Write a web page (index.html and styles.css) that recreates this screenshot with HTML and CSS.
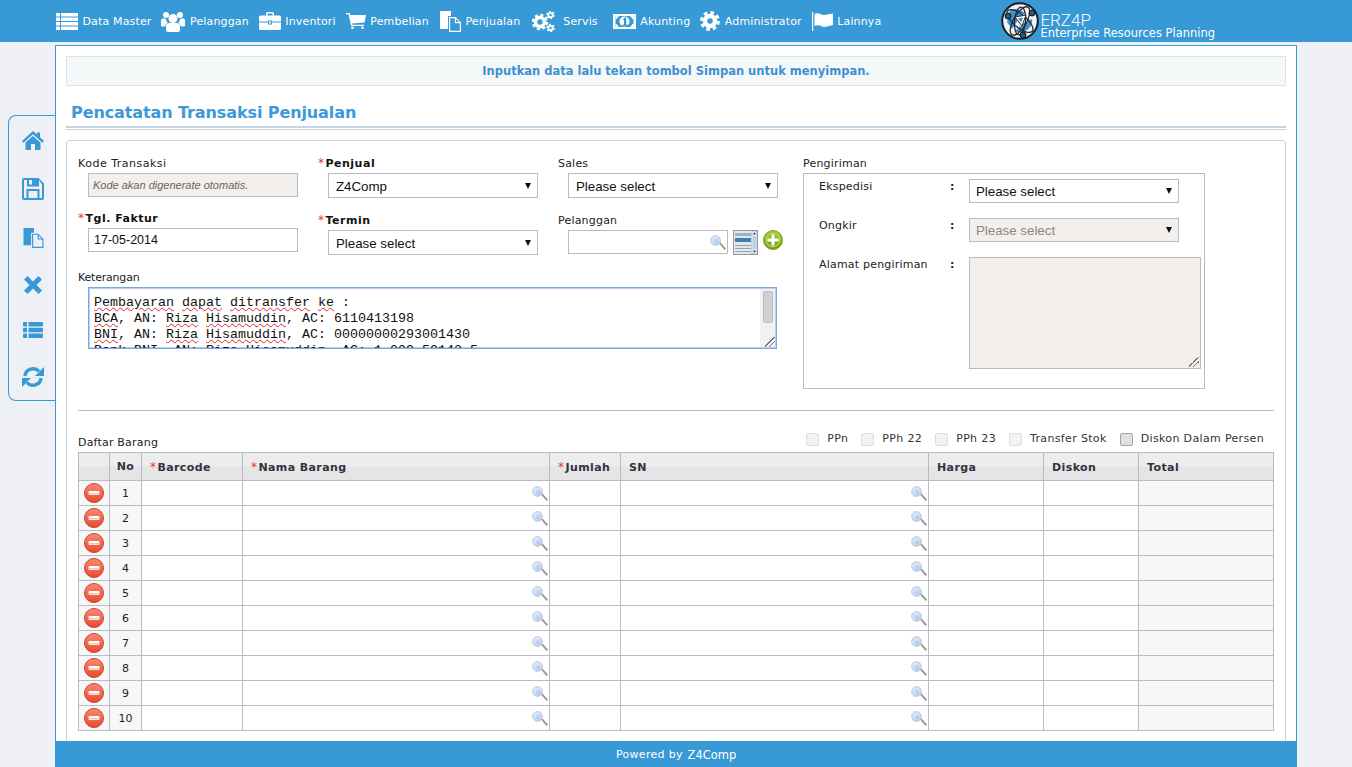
FILE: index.html
```html
<!DOCTYPE html>
<html lang="id">

<head>
    <meta charset="utf-8" />
    <title>Pencatatan Transaksi Penjualan</title>
    <link rel="stylesheet" href="styles.css">
</head>

<body>
    <svg class="sprite" xmlns="http://www.w3.org/2000/svg">
        <defs>
            <linearGradient id="redball" x1="0" y1="0" x2="0" y2="1">
                <stop offset="0" stop-color="#f98a73" />
                <stop offset="1" stop-color="#e9492f" />
            </linearGradient>
            <linearGradient id="greenball" x1="0" y1="0" x2="0" y2="1">
                <stop offset="0" stop-color="#a4cc2e" />
                <stop offset="1" stop-color="#6f9f10" />
            </linearGradient>
            <radialGradient id="lens" cx="0.6" cy="0.65" r="0.7">
                <stop offset="0" stop-color="#a9c8f5" />
                <stop offset="1" stop-color="#eef4fd" />
            </radialGradient>
        </defs>
        <symbol id="i-list" viewBox="0 0 22 17">
            <path d="M0 0h4v3.6H0zM5 0h17v3.6H5zM0 4.5h4v3.6H0zM5 4.5h17v3.6H5zM0 9h4v3.6H0zM5 9h17v3.6H5zM0 13.400h4V17H0zM5 13.400h17V17H5z" />
        </symbol>
        <symbol id="i-users" viewBox="0 0 24 21">
            <circle cx="5" cy="4" r="3" />
            <circle cx="19" cy="4" r="3" />
            <circle cx="12" cy="7.500" r="4.500" />
            <path d="M0 9.500q0-2 2-2h2.500q1 3 2 4-1.500 1-2.500 4H1q-1 0-1-1zM24 9.500q0-2-2-2h-2.500q-1 3-2 4 1.500 1 2.500 4h3q1 0 1-1zM5 15q0-3 3-3h8q3 0 3 3v4q0 2-2 2H7q-2 0-2-2z" />
        </symbol>
        <symbol id="i-case" viewBox="0 0 22 18">
            <path d="M7 4V1.500Q7 0 8.500 0h5Q15 0 15 1.500V4h-1.500V1.500h-5V4zM1.500 3.500h19Q22 3.500 22 5v4.500H13V8.500H9v1H0V5q0-1.500 1.500-1.500zM0 10.500h9V12.500h4v-2h9v6Q22 18 20.500 18h-19Q0 18 0 16.500zM10 9.500h2v2h-2z" />
        </symbol>
        <symbol id="i-cart" viewBox="0 0 20 16">
            <path d="M0 0h3.500l.7 2H20l-1.500 7.500-12.500 1 .4 1.200H18v1.300H5.200L2.500 1.300H0z" />
            <circle cx="6.500" cy="14.700" r="1.300" />
            <circle cx="16.500" cy="14.700" r="1.300" />
        </symbol>
        <symbol id="i-files" viewBox="0 0 21 21">
            <path d="M0 0h11v5H8v13H0z" />
            <path fill-rule="evenodd" d="M9 6h6.500L21 11.500V21H9zM10.200 7.200v12.600h9.600v-7.600h-5V7.200zM16 8v3h3z" />
        </symbol>
        <symbol id="i-cogs" viewBox="0 0 23 21">
            <g fill="none" stroke="currentColor">
                <circle cx="8" cy="11" r="4.500" stroke-width="3.600" />
                <circle cx="8" cy="11" r="7" stroke-width="2.500" stroke-dasharray="3.100 2.400" />
                <circle cx="18.500" cy="4" r="2.200" stroke-width="1.800" />
                <circle cx="18.500" cy="4" r="3.600" stroke-width="1.400" stroke-dasharray="1.900 1.870" />
                <circle cx="18.500" cy="17" r="2.200" stroke-width="1.800" />
                <circle cx="18.500" cy="17" r="3.600" stroke-width="1.400" stroke-dasharray="1.900 1.870" />
            </g>
        </symbol>
        <symbol id="i-money" viewBox="0 0 23 15">
            <path fill-rule="evenodd" d="M0 0h23v15H0zM2.500 2v11h18V2z" />
            <path d="M2.500 2h3v1.500h-1.500V5h-1.500zM20.500 2h-3v1.500h1.500V5h1.500zM2.500 13h3v-1.500h-1.500V10h-1.500zM20.500 13h-3v-1.500h1.500V10h1.500z" />
            <circle cx="11.500" cy="7.500" r="5" />
            <path d="M10 5l2-1.500h1.200v7H14.500V12h-5v-1.500H11V5.600L10 6.300z" fill="#3799d6" />
        </symbol>
        <symbol id="i-cog" viewBox="0 0 20 20">
            <g fill="none" stroke="currentColor">
                <circle cx="10" cy="10" r="5" stroke-width="4.500" />
                <circle cx="10" cy="10" r="8.500" stroke-width="3" stroke-dasharray="3.700 2.980" />
            </g>
        </symbol>
        <symbol id="i-flag" viewBox="0 0 21 19">
            <path d="M0 0h1.200v19H0zM2.500 2q3-1.500 6 0t6 .6Q18 2 21 1.500V13q-3 .5-6 1.500t-6-.5-6.500 0z" />
        </symbol>
        <symbol id="i-home" viewBox="0 0 22 19">
            <path d="M11 0l4 3.600V1.500h3v4.800L22 10l-1.500 1.700L11 3.200 1.500 11.700 0 10z" />
            <path d="M3.500 11.500L11 5l7.500 6.500V19H13v-6H9v6H3.500z" />
        </symbol>
        <symbol id="i-save" viewBox="0 0 22 22">
            <path fill-rule="evenodd" d="M2 0h14.500L22 5.500V20q0 2-2 2H2q-2 0-2-2V2q0-2 2-2zM2 2v18h2.500v-9h13v9H20V6.500L17 2v6.500H5V2zM6.500 13v7h9v-7zM7 2v4.500h3V2z" />
        </symbol>
        <symbol id="i-cross" viewBox="0 0 18 18">
            <path d="M3.500 0L9 5.500 14.500 0 18 3.500 12.500 9 18 14.500 14.500 18 9 12.500 3.500 18 0 14.500 5.500 9 0 3.500z" />
        </symbol>
        <symbol id="i-rows" viewBox="0 0 20 16">
            <path d="M1 0h3v4.500H1q-1 0-1-1V1q0-1 1-1zM5.500 0H19q1 0 1 1v2.500q0 1-1 1H5.500zM1 5.700h3v4.600H1q-1 0-1-1V6.700q0-1 1-1zM5.500 5.700H19q1 0 1 1v2.600q0 1-1 1H5.500zM1 11.500h3V16H1q-1 0-1-1v-2.500q0-1 1-1zM5.500 11.500H19q1 0 1 1V15q0 1-1 1H5.500z" />
        </symbol>
        <symbol id="i-refresh" viewBox="0 0 22 22">
            <path d="M3 10A8 8 0 0 1 17 5.500" fill="none" stroke="currentColor" stroke-width="3.400" />
            <path d="M22 1v9h-9z" />
            <path d="M19 12A8 8 0 0 1 5 16.500" fill="none" stroke="currentColor" stroke-width="3.400" />
            <path d="M0 21v-9h9z" />
        </symbol>
        <symbol id="i-search" viewBox="0 0 16 15">
            <path d="M9 8.500l1.500-1L16 13.500 14.500 15z" fill="#9a9a9a" />
            <circle cx="5.500" cy="5.500" r="4.800" fill="url(#lens)" stroke="#b7bec9" />
        </symbol>
        <symbol id="i-del" viewBox="0 0 20 20">
            <circle cx="10" cy="10" r="9.500" fill="url(#redball)" stroke="#c8452f" />
            <rect x="4.500" y="8" width="11" height="4" rx="1" fill="#fff" />
            <rect x="5" y="10" width="10" height="1.500" fill="#f3c2b8" />
        </symbol>
        <symbol id="i-add" viewBox="0 0 20 20">
            <circle cx="10" cy="10" r="9.500" fill="url(#greenball)" stroke="#7fa51c" />
            <circle cx="10" cy="10" r="6.800" fill="none" stroke="#c9e27a" />
            <path d="M8.500 4.500h3v4h4v3h-4v4h-3v-4h-4v-3h4z" fill="#fff" />
        </symbol>
        <symbol id="i-lookup" viewBox="0 0 25 25">
            <rect x=".5" y=".5" width="24" height="24" fill="#e4e8ec" stroke="#8d99a6" />
            <rect x="2" y="3" width="16" height="3" fill="#9db2c6" />
            <rect x="2" y="8" width="16" height="4" fill="#3f7db5" />
            <path d="M2 15h16v1H2zM2 18h16v1H2zM2 21h16v1H2z" fill="#9aa3ad" />
            <rect x="19" y="1" width="5" height="23" fill="#f4f6f8" stroke="#8d99a6" stroke-width=".6" />
            <rect x="20" y="6" width="3" height="13" fill="#bcd2ea" />
            <path d="M21.500 2l1.500 2.500h-3zM21.500 23l1.500-2.500h-3z" fill="#2f4f74" />
        </symbol>
    </svg>

    <header class="topbar">
        <nav class="topnav">
            <a class="topnav-item"><svg class="ic" width="22" height="17"><use href="#i-list" /></svg>Data Master</a>
            <a class="topnav-item"><svg class="ic" width="24" height="21"><use href="#i-users" /></svg>Pelanggan</a>
            <a class="topnav-item"><svg class="ic" width="22" height="18"><use href="#i-case" /></svg>Inventori</a>
            <a class="topnav-item"><svg class="ic" width="20" height="16"><use href="#i-cart" /></svg>Pembelian</a>
            <a class="topnav-item nudge-1"><svg class="ic" width="21" height="21"><use href="#i-files" /></svg>Penjualan</a>
            <a class="topnav-item nudge-2"><svg class="ic ic-wide" width="23" height="21"><use href="#i-cogs" /></svg>Servis</a>
            <a class="topnav-item nudge-5"><svg class="ic" width="23" height="15"><use href="#i-money" /></svg>Akunting</a>
            <a class="topnav-item"><svg class="ic" width="20" height="20"><use href="#i-cog" /></svg>Administrator</a>
            <a class="topnav-item"><svg class="ic" width="21" height="19"><use href="#i-flag" /></svg>Lainnya</a>
        </nav>
        <div class="brand">
            <svg class="brand-logo" width="38" height="38" viewBox="0 0 38 38">
                <circle cx="19" cy="19" r="17.800" fill="#eef3f7" stroke="#1d1d1f" stroke-width="2" />
                <path d="M9 8q8-3 15 3l-5 4-8 12-5-7z" fill="#3a93cf" />
                <path d="M26 28q-6 4-12 1l9-8 8-4q1 6-5 11z" fill="#3a93cf" />
                <g fill="none" stroke="#2b2b2d" stroke-width="1.300">
                    <ellipse cx="19" cy="19" rx="16" ry="6.500" transform="rotate(40 19 19)" />
                    <ellipse cx="19" cy="19" rx="16" ry="6.500" transform="rotate(-60 19 19)" />
                    <ellipse cx="19" cy="19" rx="14" ry="5.500" transform="rotate(95 19 19)" />
                </g>
                <path d="M14 15l11-2-4 11z" fill="#fff" stroke="#2b2b2d" />
                <path d="M17 16.500l5-1-2 5z" fill="#3a93cf" />
                <circle cx="7" cy="14" r="3" fill="#1c5d86" stroke="#111" />
                <circle cx="31" cy="11" r="3" fill="#1c5d86" stroke="#111" />
                <circle cx="22" cy="33" r="3" fill="#1c5d86" stroke="#111" />
            </svg>
            <div class="brand-text">
                <div class="brand-name">ERZ4P</div>
                <div class="brand-sub">Enterprise Resources Planning</div>
            </div>
        </div>
    </header>

    <div class="page">
        <aside class="sidemenu">
            <svg width="22" height="19"><use href="#i-home" /></svg>
            <svg width="22" height="22"><use href="#i-save" /></svg>
            <svg width="21" height="20"><use href="#i-files" /></svg>
            <svg width="18" height="18"><use href="#i-cross" /></svg>
            <svg width="20" height="16"><use href="#i-rows" /></svg>
            <svg width="22" height="22"><use href="#i-refresh" /></svg>
        </aside>

        <div class="shell">
            <main class="content">
                <div class="notice">Inputkan data lalu tekan tombol Simpan untuk menyimpan.</div>
                <h1 class="title">Pencatatan Transaksi Penjualan</h1>
                <div class="title-rule"></div>

                <section class="panel">
                    <div class="form-top">
                        <div class="form-left">
                            <div class="form-cols">
                                <div class="form-col col-a">
                                    <div class="field">
                                        <label class="wide">Kode Transaksi</label>
                                        <input class="ctl ctl-off ctl-code" placeholder="Kode akan digenerate otomatis." disabled>
                                    </div>
                                    <div class="field">
                                        <label class="req"><i>*</i>Tgl. Faktur</label>
                                        <input class="ctl" value="17-05-2014">
                                    </div>
                                </div>
                                <div class="form-col col-b">
                                    <div class="field">
                                        <label class="req"><i>*</i>Penjual</label>
                                        <div class="sel sel-tall"><select><option>Z4Comp</option></select></div>
                                    </div>
                                    <div class="field">
                                        <label class="req"><i>*</i>Termin</label>
                                        <div class="sel sel-tall"><select><option>Please select</option></select></div>
                                    </div>
                                </div>
                                <div class="form-col col-b">
                                    <div class="field">
                                        <label>Sales</label>
                                        <div class="sel sel-tall"><select><option>Please select</option></select></div>
                                    </div>
                                    <div class="field">
                                        <label>Pelanggan</label>
                                        <div class="customer">
                                            <div class="ctl customer-box"><svg width="16" height="15"><use href="#i-search" /></svg></div>
                                            <svg width="25" height="25"><use href="#i-lookup" /></svg>
                                            <svg width="20" height="20"><use href="#i-add" /></svg>
                                        </div>
                                    </div>
                                </div>
                            </div>
                            <div class="field field-memo">
                                <label>Keterangan</label>
                                <div class="memo">
                                    <div class="memo-line"><u>Pembayaran</u> <u>dapat</u> <u>ditransfer</u> <u>ke</u> :</div>
                                    <div class="memo-line"><u>BCA</u>, AN: <u>Riza</u> <u>Hisamuddin</u>, AC: 6110413198</div>
                                    <div class="memo-line"><u>BNI</u>, AN: <u>Riza</u> <u>Hisamuddin</u>, AC: 00000000293001430</div>
                                    <div class="memo-line"><u>Bank</u> <u>BNI</u>, AN: <u>Riza</u> <u>Hisamuddin</u>, AC: 1.009.50142.5</div>
                                    <div class="memo-bar"><div class="memo-thumb"></div></div>
                                    <div class="grip"></div>
                                </div>
                            </div>
                        </div>

                        <div class="shipping">
                            <label>Pengiriman</label>
                            <div class="shipping-box">
                                <span class="ship-label">Ekspedisi</span>
                                <span class="ship-colon">:</span>
                                <div class="sel"><select><option>Please select</option></select></div>
                                <span class="ship-label">Ongkir</span>
                                <span class="ship-colon">:</span>
                                <div class="sel sel-off"><select disabled><option>Please select</option></select></div>
                                <span class="ship-label">Alamat pengiriman</span>
                                <span class="ship-colon">:</span>
                                <div class="ship-address"><div class="grip"></div></div>
                            </div>
                        </div>
                    </div>

                    <hr class="divider">

                    <div class="items-head">
                        <span class="items-title">Daftar Barang</span>
                        <div class="flags">
                            <label class="flag"><input type="checkbox">PPn</label>
                            <label class="flag"><input type="checkbox">PPh 22</label>
                            <label class="flag"><input type="checkbox">PPh 23</label>
                            <label class="flag"><input type="checkbox">Transfer Stok</label>
                            <label class="flag flag-focus"><input type="checkbox">Diskon Dalam Persen</label>
                        </div>
                    </div>

                    <table class="items">
                        <colgroup>
                            <col class="c-del"><col class="c-no"><col class="c-code"><col class="c-name"><col class="c-qty"><col class="c-sn"><col class="c-price"><col class="c-disc"><col>
                        </colgroup>
                        <thead>
                            <tr>
                                <th></th>
                                <th class="mid">No</th>
                                <th><i>*</i>Barcode</th>
                                <th><i>*</i>Nama Barang</th>
                                <th><i>*</i>Jumlah</th>
                                <th>SN</th>
                                <th>Harga</th>
                                <th>Diskon</th>
                                <th>Total</th>
                            </tr>
                        </thead>
                        <tbody>
                            <tr><td class="soft"><svg class="del" width="20" height="20"><use href="#i-del" /></svg></td><td class="soft mid">1</td><td></td><td class="find"><svg width="16" height="15"><use href="#i-search" /></svg></td><td></td><td class="find"><svg width="16" height="15"><use href="#i-search" /></svg></td><td></td><td></td><td class="soft"></td></tr>
                            <tr><td class="soft"><svg class="del" width="20" height="20"><use href="#i-del" /></svg></td><td class="soft mid">2</td><td></td><td class="find"><svg width="16" height="15"><use href="#i-search" /></svg></td><td></td><td class="find"><svg width="16" height="15"><use href="#i-search" /></svg></td><td></td><td></td><td class="soft"></td></tr>
                            <tr><td class="soft"><svg class="del" width="20" height="20"><use href="#i-del" /></svg></td><td class="soft mid">3</td><td></td><td class="find"><svg width="16" height="15"><use href="#i-search" /></svg></td><td></td><td class="find"><svg width="16" height="15"><use href="#i-search" /></svg></td><td></td><td></td><td class="soft"></td></tr>
                            <tr><td class="soft"><svg class="del" width="20" height="20"><use href="#i-del" /></svg></td><td class="soft mid">4</td><td></td><td class="find"><svg width="16" height="15"><use href="#i-search" /></svg></td><td></td><td class="find"><svg width="16" height="15"><use href="#i-search" /></svg></td><td></td><td></td><td class="soft"></td></tr>
                            <tr><td class="soft"><svg class="del" width="20" height="20"><use href="#i-del" /></svg></td><td class="soft mid">5</td><td></td><td class="find"><svg width="16" height="15"><use href="#i-search" /></svg></td><td></td><td class="find"><svg width="16" height="15"><use href="#i-search" /></svg></td><td></td><td></td><td class="soft"></td></tr>
                            <tr><td class="soft"><svg class="del" width="20" height="20"><use href="#i-del" /></svg></td><td class="soft mid">6</td><td></td><td class="find"><svg width="16" height="15"><use href="#i-search" /></svg></td><td></td><td class="find"><svg width="16" height="15"><use href="#i-search" /></svg></td><td></td><td></td><td class="soft"></td></tr>
                            <tr><td class="soft"><svg class="del" width="20" height="20"><use href="#i-del" /></svg></td><td class="soft mid">7</td><td></td><td class="find"><svg width="16" height="15"><use href="#i-search" /></svg></td><td></td><td class="find"><svg width="16" height="15"><use href="#i-search" /></svg></td><td></td><td></td><td class="soft"></td></tr>
                            <tr><td class="soft"><svg class="del" width="20" height="20"><use href="#i-del" /></svg></td><td class="soft mid">8</td><td></td><td class="find"><svg width="16" height="15"><use href="#i-search" /></svg></td><td></td><td class="find"><svg width="16" height="15"><use href="#i-search" /></svg></td><td></td><td></td><td class="soft"></td></tr>
                            <tr><td class="soft"><svg class="del" width="20" height="20"><use href="#i-del" /></svg></td><td class="soft mid">9</td><td></td><td class="find"><svg width="16" height="15"><use href="#i-search" /></svg></td><td></td><td class="find"><svg width="16" height="15"><use href="#i-search" /></svg></td><td></td><td></td><td class="soft"></td></tr>
                            <tr><td class="soft"><svg class="del" width="20" height="20"><use href="#i-del" /></svg></td><td class="soft mid">10</td><td></td><td class="find"><svg width="16" height="15"><use href="#i-search" /></svg></td><td></td><td class="find"><svg width="16" height="15"><use href="#i-search" /></svg></td><td></td><td></td><td class="soft"></td></tr>
                        </tbody>
                    </table>
                </section>
            </main>
            <footer class="footer">Powered by <span class="footer-brand">Z4Comp</span></footer>
        </div>
    </div>
</body>

</html>
```
FILE: styles.css
```css
html,
body {
    height: 100%;
    margin: 0;
}

body {
    display: flex;
    flex-direction: column;
    overflow: hidden;
    background-color: #eff0f6;
    font-family: "DejaVu Sans", Verdana, sans-serif;
    font-size: 11px;
    color: #222;
}

.sprite {
    display: block;
    width: 0;
    height: 0;
}

/* top bar */
.topbar {
    display: flex;
    flex: none;
    height: 42px;
    padding-left: 56px;
    background-color: #3799d6;
    color: #fff;
}

.topnav {
    display: flex;
    align-items: center;
    gap: 10px;
    letter-spacing: .15px;
}

.topnav-item {
    display: flex;
    align-items: center;
    fill: #fff;
    color: #fff;
}

.nudge-1 {
    margin-left: 1px;
}

.nudge-2 {
    margin-left: 2px;
}

.nudge-5 {
    margin-left: 5px;
}

.ic {
    flex: none;
    margin-right: 4.500px;
}

.ic-wide {
    margin-right: 8px;
}

.brand {
    display: flex;
    margin-left: 120px;
    padding-top: 2px;
}

.brand-text {
    margin-left: 1px;
}

.brand-name {
    height: 24px;
    padding-top: 12px;
    box-sizing: border-box;
    font-family: Roboto, sans-serif;
    font-weight: 300;
    font-size: 17px;
    line-height: 12px;
}

.brand-sub {
    font-size: 11.500px;
    line-height: 14px;
}

/* page columns */
.page {
    display: flex;
    flex: 1;
    min-height: 0;
    padding-left: 8px;
}

.sidemenu {
    display: flex;
    flex-direction: column;
    align-items: center;
    flex: none;
    gap: 28px;
    box-sizing: border-box;
    width: 47px;
    height: 286px;
    margin-top: 73px;
    padding: 15px 0 0 2px;
    border: 1px solid #3799d6;
    border-right: 0;
    border-radius: 8px 0 0 8px;
    fill: #3799d6;
    color: #3799d6;
}

.shell {
    display: flex;
    flex-direction: column;
    width: 1242px;
    margin-top: 3px;
}

.content {
    flex: 1;
    min-height: 0;
    overflow: hidden;
    padding: 10px 10px 0;
    border: 1px solid #3799d6;
    border-bottom: 0;
    background-color: #fff;
}

.footer {
    flex: none;
    height: 26px;
    padding-left: 561px;
    background-color: #3799d6;
    color: #fff;
    letter-spacing: .3px;
    line-height: 26px;
}

.footer-brand {
    position: relative;
    top: 1px;
    margin-left: 1px;
    letter-spacing: 0;
    font-size: 11.500px;
}

/* heading */
.notice {
    height: 30px;
    box-sizing: border-box;
    border: 1px solid #d8e4f3;
    background-color: #f4f8f9;
    color: #3f8fd2;
    font-weight: bold;
    font-size: 11.500px;
    line-height: 29px;
    text-align: center;
}

.title {
    height: 42px;
    margin: 0;
    padding-left: 5px;
    box-sizing: border-box;
    border-bottom: 2px solid #c5d5e3;
    color: #3d98d8;
    font-size: 16px;
    letter-spacing: -.1px;
    line-height: 53px;
}

.title-rule {
    height: 1px;
    margin-top: 1px;
    background-color: #c5d5e3;
}

.panel {
    margin-top: 10px;
    padding: 15px 11px 40px;
    border: 1px solid #c5d5e3;
    border-radius: 3px;
}

/* form */
label,
.ship-label,
.ship-colon,
.items-title {
    line-height: 16px;
    letter-spacing: .2px;
}

label {
    display: block;
    color: #222;
}

label.wide {
    letter-spacing: .5px;
}

.req {
    font-weight: bold;
    color: #111;
    letter-spacing: .5px;
}

.req i,
.items th i {
    margin-right: 1px;
    font-style: normal;
    font-weight: normal;
    font-size: 12px;
    line-height: 0;
    color: #f0372a;
}

.form-top {
    display: flex;
}

.form-left {
    width: 725px;
}

.form-cols {
    display: flex;
}

.form-col {
    display: flex;
    flex-direction: column;
    width: 240px;
}

.col-a {
    gap: 14px;
}

.col-b {
    gap: 15px;
}

.field > label + * {
    margin-top: 1px;
    margin-left: 10px;
}

.ctl {
    display: block;
    box-sizing: border-box;
    width: 210px;
    height: 24px;
    padding: 0 5px;
    border: 1px solid #bbb;
    border-radius: 0;
    background-color: #fff;
    font-family: "Liberation Sans", Arial, sans-serif;
    font-size: 12.500px;
    color: #111;
    outline: 0;
}

.ctl-off {
    background-color: #f3efec;
}

.ctl-code {
    padding-left: 4px;
}

.ctl-code::placeholder {
    font-style: italic;
    font-size: 11px;
    color: #666;
    opacity: 1;
}

.sel {
    position: relative;
    width: 210px;
    height: 24px;
}

.sel-tall {
    height: 25px;
}

.sel select {
    display: block;
    box-sizing: border-box;
    width: 100%;
    height: 100%;
    padding: 1px 7px 0;
    border: 1px solid #bbb;
    border-radius: 0;
    background-color: #fff;
    font-family: "Liberation Sans", Arial, sans-serif;
    font-size: 13.300px;
    color: #111;
    appearance: none;
}

.sel::after {
    content: "";
    position: absolute;
    top: 9px;
    right: 7px;
    border-top: 6px solid #111;
    border-left: 3px solid transparent;
    border-right: 3px solid transparent;
}

.sel-tall::after {
    top: 10px;
}

.shipping-box .sel select {
    padding-left: 6px;
}

.sel-off select {
    background-color: #f3efec;
    color: #888;
    opacity: 1;
}

.customer {
    display: flex;
    align-items: flex-start;
    gap: 5px;
}

.customer-box {
    display: flex;
    align-items: center;
    justify-content: flex-end;
    width: 160px;
    padding: 0 1px 0 0;
}

.field-memo {
    margin-top: 15px;
}

.field-memo label {
    letter-spacing: -.2px;
}

.memo {
    position: relative;
    box-sizing: border-box;
    width: 689px;
    height: 62px;
    padding: 7px 5px;
    overflow: hidden;
    border: 1px solid #7da7e2;
    box-shadow: 0 0 0 1px #b8cff2 inset;
    font-family: "Liberation Mono", "Courier New", monospace;
    font-size: 13.330px;
    line-height: 16px;
    color: #111;
}

.memo-line {
    white-space: pre;
}

.memo u {
    text-decoration: underline wavy #d8282a 1px;
    text-underline-offset: 1px;
}

.memo-bar {
    position: absolute;
    top: 1px;
    right: 1px;
    bottom: 1px;
    width: 15px;
    background-color: #f1f1f1;
}

.memo-thumb {
    width: 10px;
    height: 32px;
    margin: 2px 0 0 3px;
    border: 1px solid #bdbdbd;
    border-radius: 2px;
    background-color: #d0d0d0;
    box-sizing: border-box;
}

.grip {
    position: absolute;
    right: 1px;
    bottom: 1px;
    width: 10px;
    height: 10px;
    background: linear-gradient(135deg, transparent 45%, #777 45%, #777 52%, transparent 52%, transparent 68%, #777 68%, #777 75%, transparent 75%);
}

.shipping {
    width: 402px;
}

.shipping-box {
    display: grid;
    grid-template-columns: 131px 19px 1fr;
    grid-template-rows: 24px 24px auto;
    row-gap: 15px;
    box-sizing: border-box;
    height: 216px;
    margin-top: 1px;
    padding: 5px 3px 0 15px;
    border: 1px solid #bbb;
}

.ship-colon {
    font-weight: bold;
}

.ship-address {
    position: relative;
    box-sizing: border-box;
    height: 112px;
    border: 1px solid #bbb;
    background-color: #f3efec;
}

/* items */
.divider {
    height: 1px;
    margin: 21px 0 0;
    border: 0;
    background-color: #bbb;
}

.items-head {
    display: flex;
    justify-content: space-between;
    align-items: flex-end;
    height: 33px;
    padding-right: 10px;
    margin-top: 8px;
}

.items-title {
    margin-bottom: 1px;
}

.flags {
    display: flex;
    gap: 13px;
    margin-bottom: 5px;
}

.flag {
    display: flex;
    align-items: center;
    color: #333;
    letter-spacing: .35px;
}

.flag input {
    box-sizing: border-box;
    width: 13px;
    height: 13px;
    margin: 0 8px 0 0;
    border: 1px solid #ddd;
    border-radius: 2px;
    background-color: #f2f2f2;
    appearance: none;
}

.flag-focus input {
    border-color: #a5a5a5;
    background-color: #e0e0e0;
}

.items {
    width: 1196px;
    border-collapse: collapse;
    table-layout: fixed;
}

.c-del { width: 31px; }
.c-no { width: 32px; }
.c-code { width: 101px; }
.c-name { width: 307px; }
.c-qty { width: 71px; }
.c-sn { width: 308px; }
.c-price { width: 115px; }
.c-disc { width: 95px; }

.items th,
.items td {
    padding: 0;
    border: 1px solid #b6bdc3;
    text-align: left;
}

.items th {
    height: 26px;
    padding: 1px 0 0 8px;
    background: linear-gradient(#ededed 50%, #e5e5e5 50%);
    font-size: 11px;
    letter-spacing: .4px;
    color: #333340;
}

.items td {
    height: 24px;
}

.items .mid {
    padding: 0;
    text-align: center;
}

.items .soft {
    background-color: #f7f7f7;
}

.del {
    display: block;
    margin: 0 auto;
}

.find svg {
    display: block;
    margin-left: auto;
    margin-right: 1px;
}
```
